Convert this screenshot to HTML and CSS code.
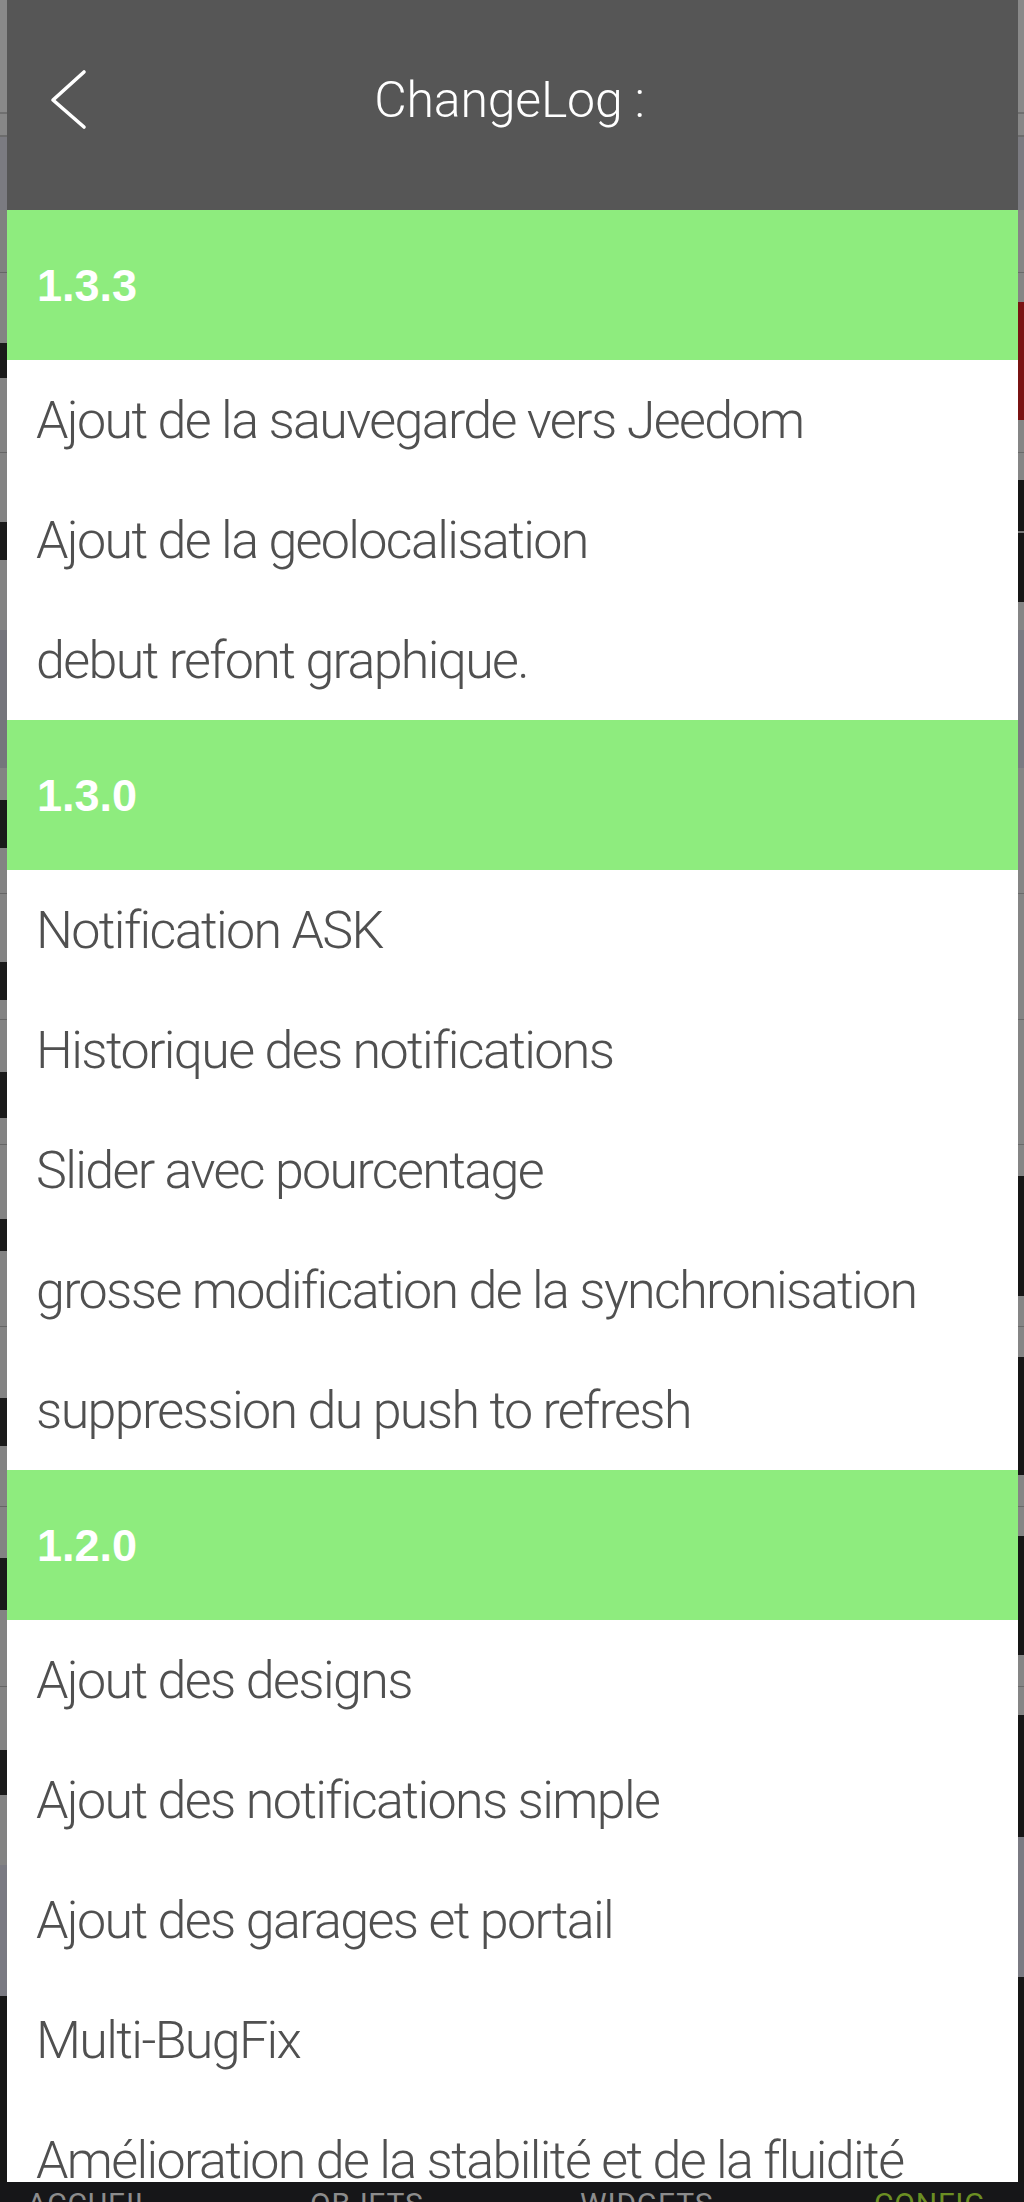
FILE: index.html
```html
<!DOCTYPE html>
<html lang="fr">
<head>
<meta charset="utf-8">
<title>ChangeLog</title>
<link rel="stylesheet" href="styles.css">
</head>
<body>
<div class="screen">
  <div class="stage">
    <div class="edge edge-left"></div>
    <div class="modal">
      <header class="modal-header">
        <div class="back">
          <svg class="back-icon" width="48" height="64" viewBox="0 0 48 64" aria-hidden="true">
            <polyline points="40,4 9,32 40,59" fill="none" stroke="#ffffff" stroke-width="3.6" stroke-linecap="round" stroke-linejoin="round"/>
          </svg>
        </div>
        <h1 class="title">ChangeLog :</h1>
        <div class="spacer"></div>
      </header>

      <section class="release">
        <h2 class="version">1.3.3</h2>
        <ul class="changes">
          <li class="change">Ajout de la sauvegarde vers Jeedom</li>
          <li class="change">Ajout de la geolocalisation</li>
          <li class="change">debut refont graphique.</li>
        </ul>
      </section>

      <section class="release">
        <h2 class="version">1.3.0</h2>
        <ul class="changes">
          <li class="change">Notification ASK</li>
          <li class="change">Historique des notifications</li>
          <li class="change">Slider avec pourcentage</li>
          <li class="change">grosse modification de la synchronisation</li>
          <li class="change">suppression du push to refresh</li>
        </ul>
      </section>

      <section class="release">
        <h2 class="version">1.2.0</h2>
        <ul class="changes">
          <li class="change">Ajout des designs</li>
          <li class="change">Ajout des notifications simple</li>
          <li class="change">Ajout des garages et portail</li>
          <li class="change">Multi-BugFix</li>
          <li class="change">Amélioration de la stabilité et de la fluidité</li>
        </ul>
      </section>
    </div>
    <div class="edge edge-right"></div>
  </div>
  <nav class="tabbar">
    <span class="tab">ACCUEIL</span>
    <span class="tab">OBJETS</span>
    <span class="tab">WIDGETS</span>
    <span class="tab tab-active">CONFIG</span>
  </nav>
</div>
</body>
</html>
```

FILE: styles.css
```css
html, body {
  margin: 0;
  padding: 0;
  height: 2202px;
  overflow: hidden;
  background: #161616;
}

.screen {
  width: 1024px;
  height: 2202px;
  display: flex;
  flex-direction: column;
  overflow: hidden;
  font-family: "Roboto Light", Lato, "Liberation Sans", sans-serif;
}

.stage {
  height: 2182px;
  flex: none;
  display: flex;
  flex-direction: row;
}

.edge {
  flex: none;
  height: 100%;
}

.edge-left {
  width: 7px;
  background: linear-gradient(to bottom,
    #898989 0px, #898989 112px,
    #6f6f6f 112px, #6f6f6f 114px,
    #878787 114px, #878787 135px,
    #6c6c6c 135px, #6c6c6c 137px,
    #7b7b81 137px, #7b7b81 210px,
    #808080 210px, #808080 272px,
    #666666 272px, #666666 273px,
    #838383 273px, #838383 343px,
    #1a1a1a 343px, #1a1a1a 378px,
    #838383 378px, #838383 452px,
    #666666 452px, #666666 453px,
    #838383 453px, #838383 522px,
    #1a1a1a 522px, #1a1a1a 560px,
    #838383 560px, #838383 630px,
    #75757c 630px, #75757c 768px,
    #838383 768px, #838383 800px,
    #1a1a1a 800px, #1a1a1a 848px,
    #838383 848px, #838383 893px,
    #666666 893px, #666666 894px,
    #838383 894px, #838383 962px,
    #1a1a1a 962px, #1a1a1a 1000px,
    #838383 1000px, #838383 1019px,
    #666666 1019px, #666666 1020px,
    #838383 1020px, #838383 1072px,
    #1a1a1a 1072px, #1a1a1a 1118px,
    #838383 1118px, #838383 1144px,
    #666666 1144px, #666666 1145px,
    #838383 1145px, #838383 1219px,
    #1a1a1a 1219px, #1a1a1a 1251px,
    #838383 1251px, #838383 1326px,
    #666666 1326px, #666666 1327px,
    #838383 1327px, #838383 1398px,
    #1a1a1a 1398px, #1a1a1a 1446px,
    #838383 1446px, #838383 1506px,
    #666666 1506px, #666666 1507px,
    #838383 1507px, #838383 1558px,
    #1a1a1a 1558px, #1a1a1a 1610px,
    #838383 1610px, #838383 1686px,
    #666666 1686px, #666666 1687px,
    #838383 1687px, #838383 1750px,
    #1a1a1a 1750px, #1a1a1a 1795px,
    #838383 1795px, #838383 1865px,
    #7a7a82 1865px, #7a7a82 1996px,
    #161616 1996px, #161616 100%);
}

.edge-right {
  width: 6px;
  background: linear-gradient(to bottom,
    #898989 0px, #898989 112px,
    #6f6f6f 112px, #6f6f6f 114px,
    #878787 114px, #878787 135px,
    #6c6c6c 135px, #6c6c6c 137px,
    #7b7b81 137px, #7b7b81 210px,
    #858585 210px, #858585 272px,
    #6a6a6a 272px, #6a6a6a 273px,
    #858585 273px, #858585 302px,
    #7a1313 302px, #7a1313 420px,
    #858585 420px, #858585 452px,
    #6a6a6a 452px, #6a6a6a 453px,
    #858585 453px, #858585 480px,
    #161616 480px, #161616 531px,
    #777777 531px, #777777 533px,
    #161616 533px, #161616 602px,
    #858585 602px, #858585 630px,
    #7a7a82 630px, #7a7a82 768px,
    #858585 768px, #858585 893px,
    #6a6a6a 893px, #6a6a6a 894px,
    #858585 894px, #858585 1019px,
    #6a6a6a 1019px, #6a6a6a 1020px,
    #858585 1020px, #858585 1144px,
    #6a6a6a 1144px, #6a6a6a 1145px,
    #858585 1145px, #858585 1176px,
    #161616 1176px, #161616 1296px,
    #858585 1296px, #858585 1326px,
    #6a6a6a 1326px, #6a6a6a 1327px,
    #858585 1327px, #858585 1357px,
    #161616 1357px, #161616 1475px,
    #858585 1475px, #858585 1506px,
    #6a6a6a 1506px, #6a6a6a 1507px,
    #858585 1507px, #858585 1536px,
    #161616 1536px, #161616 1655px,
    #858585 1655px, #858585 1686px,
    #6a6a6a 1686px, #6a6a6a 1687px,
    #858585 1687px, #858585 1715px,
    #161616 1715px, #161616 1837px,
    #7a7a82 1837px, #7a7a82 1977px,
    #161616 1977px, #161616 100%);
}

.modal {
  flex: 1 1 auto;
  min-width: 0;
  height: 100%;
  overflow: hidden;
  background: #ffffff;
}

.modal-header {
  height: 210px;
  box-sizing: border-box;
  padding: 0 6px 11px 0;
  background: #565656;
  display: grid;
  grid-template-columns: 1fr auto 1fr;
  align-items: center;
}

.back {
  display: flex;
  align-items: center;
  padding-left: 37px;
}

.back-icon {
  display: block;
}

.title {
  margin: 0;
  font-family: "Roboto Light", Lato, "Liberation Sans", sans-serif;
  font-weight: 300;
  font-size: 50px;
  line-height: 1;
  color: #ffffff;
  letter-spacing: -0.2px;
  font-variant-ligatures: none;
}

.release {
  margin: 0;
}

.version {
  margin: 0;
  height: 150px;
  box-sizing: border-box;
  padding-left: 30px;
  display: flex;
  align-items: center;
  background: #8eec7e;
  color: #ffffff;
  font-family: "Liberation Sans", Arial, sans-serif;
  font-weight: 700;
  font-size: 45px;
  line-height: 1;
}

.changes {
  list-style: none;
  margin: 0;
  padding: 0;
}

.change {
  height: 120px;
  box-sizing: border-box;
  padding: 3px 0 0 29px;
  display: flex;
  align-items: center;
  font-family: "Roboto Light", Lato, "Liberation Sans", sans-serif;
  font-weight: 300;
  font-size: 52px;
  line-height: 0.7;
  color: #505050;
  letter-spacing: -1.65px;
  white-space: nowrap;
  font-variant-ligatures: none;
}

.tabbar {
  flex: none;
  height: 60px;
  box-sizing: border-box;
  padding: 7px 0 0 27px;
  background: #161618;
  display: grid;
  grid-template-columns: 283px 270px 294px 1fr;
  align-items: start;
}

.tab {
  font-family: Roboto, "Liberation Sans", sans-serif;
  font-weight: 400;
  font-size: 30px;
  line-height: 1;
  color: #8c8c8c;
  letter-spacing: 0.8px;
}

.tab-active {
  color: #6b8e23;
}
```
